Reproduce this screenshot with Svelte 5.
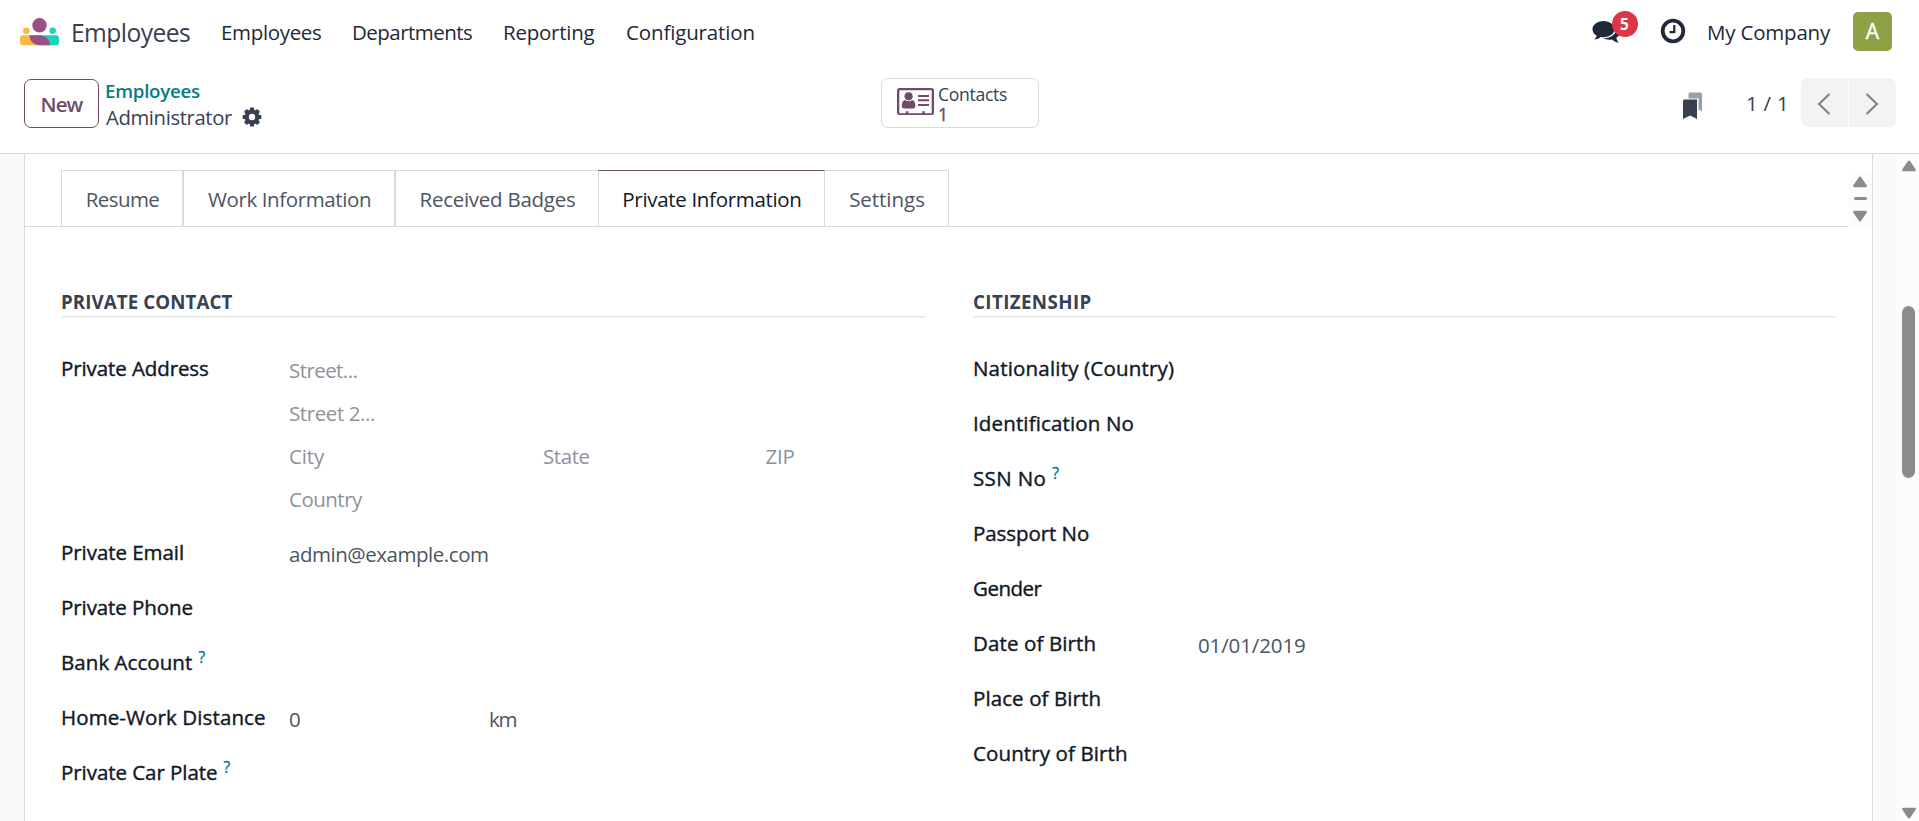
<script>
  const pen = document.createElement('canvas').getContext('2d');

  // Tracks a label so that its glyphs span the given width in pixels.
  function span(node, width) {
    const text = node.textContent;
    const cs = getComputedStyle(node);
    pen.font = `${cs.fontWeight} ${cs.fontSize} "Open Sans"`;
    const m = pen.measureText(text);
    const ink = m.actualBoundingBoxLeft + m.actualBoundingBoxRight;
    if (width && text.length > 1) {
      node.style.letterSpacing = `${(width - ink) / (text.length - 1)}px`;
    }
  }

  const menu = [
    { text: 'Employees', w: 98 },
    { text: 'Departments', w: 118 },
    { text: 'Reporting', w: 89.5 },
    { text: 'Configuration', w: 126.5 },
  ];

  const tabs = [
    { text: 'Resume', w: 71.5, size: 122 },
    { text: 'Work Information', w: 162, size: 212 },
    { text: 'Received Badges', w: 153.5, size: 203, before: true },
    { text: 'Private Information', w: 176, size: 227, active: true },
    { text: 'Settings', w: 74, size: 124, after: true },
  ];

  const contact = [
    { text: 'Private Email', w: 120, value: 'admin@example.com', vw: 199 },
    { text: 'Private Phone', w: 129.5 },
    { text: 'Bank Account', w: 129, help: true },
    { text: 'Home-Work Distance', w: 202, value: '0', unit: 'km' },
    { text: 'Private Car Plate', w: 154, help: true },
  ];

  const citizenship = [
    { text: 'Nationality (Country)', w: 199 },
    { text: 'Identification No', w: 158.5 },
    { text: 'SSN No', w: 71.5, help: true },
    { text: 'Passport No', w: 114 },
    { text: 'Gender', w: 68.5 },
    { text: 'Date of Birth', w: 119.5, value: '01/01/2019', vw: 106 },
    { text: 'Place of Birth', w: 124.5 },
    { text: 'Country of Birth', w: 152 },
  ];
</script>

{#snippet row(r)}
  <div class="row">
    <div class="label"><span use:span={r.w}>{r.text}</span>{#if r.help}<sup>?</sup>{/if}</div>
    <div class="value">
      {#if r.value}<span class="main" use:span={r.vw}>{r.value}</span>{/if}
      {#if r.unit}<span use:span={26.5}>{r.unit}</span>{/if}
    </div>
  </div>
{/snippet}

<div class="page">
  <header>
    <nav>
      <svg class="logo" width="40" height="28" viewBox="0 0 40 28">
        <path d="M3 17.2h17l9 10H3a3 3 0 0 1-3-3v-4a3 3 0 0 1 3-3z" fill="#fbb945" />
        <path d="M19 17.2h17a3 3 0 0 1 3 3v4a3 3 0 0 1-3 3H26z" fill="#1ad3bb" />
        <path d="M9.5 17.2H19c6 0 11 4 11 10H20c-6 0-10.500-4-10.500-10z" fill="#985184" />
        <circle cx="19.500" cy="7.300" r="7.200" fill="#985184" />
        <circle cx="6.300" cy="12.800" r="3.300" fill="#fbb945" />
        <circle cx="32.700" cy="12.800" r="3.200" fill="#1ad3bb" />
      </svg>
      <span class="brand"><span use:span={117}>Employees</span></span>
      {#each menu as m}
        <span class="item"><span use:span={m.w}>{m.text}</span></span>
      {/each}
      <div class="systray">
        <div class="chat">
          <svg width="29" height="25" viewBox="0 0 29 25" fill="#1f2937">
            <path d="M11.500 1C5.200 1 .5 4.700.5 9.300c0 2.700 1.600 5 4.200 6.500-.4 1.500-1.200 2.500-2.300 3.500 2.500-.1 4.600-1 6.300-2.400.9.200 1.800.3 2.800.3 6.300 0 11-3.500 11-7.900S17.800 1 11.500 1z" />
            <path d="M24.700 6.500c2 1.400 3.300 3.300 3.300 5.400 0 2.300-1.400 4.400-3.700 5.800.5 2.200 1.400 3.700 2.800 4.900-2.900-.2-5.300-1.400-7.100-3.200-3.200.6-6.300.1-8.800-1.100C19.200 18.400 25 13.800 24.700 6.500z" />
          </svg>
          <span class="badge">5</span>
        </div>
        <svg class="clock" width="26" height="26" viewBox="0 0 26 26" fill="none" stroke="#1f2937">
          <circle cx="13" cy="13" r="10.300" stroke-width="3.800" />
          <path d="M14.300 7v7.200H9.500" stroke-width="2.200" />
        </svg>
        <span class="company"><span use:span={122}>My Company</span></span>
        <span class="avatar">A</span>
      </div>
    </nav>

    <div class="control">
      <button class="new"><span use:span={42}>New</span></button>
      <div class="crumbs">
        <div class="parent"><span use:span={94}>Employees</span></div>
        <div class="current">
          <span use:span={126}>Administrator</span>
          <svg width="20" height="20" viewBox="-10 -10 20 20" fill="#374151">
            <g>
              {#each [0, 45, 90, 135] as a}
                <path transform="rotate({a})" d="M-1.800-9.400h3.600l.8 3.400v12l-.8 3.400h-3.600l-.8-3.400v-12z" />
              {/each}
              <circle r="7.200" />
            </g>
            <circle r="3.200" fill="#fff" />
          </svg>
        </div>
      </div>
      <div class="stat">
        <svg width="37" height="28" viewBox="0 0 37 28" fill="#714b67">
          <path fill-rule="evenodd" d="M2.500 0h32A2.500 2.500 0 0 1 37 2.500v22a2.500 2.500 0 0 1-2.500 2.500h-32A2.500 2.500 0 0 1 0 24.500v-22A2.500 2.500 0 0 1 2.500 0zM2.300 2.300v22.900h6.500v-2h2.600v2h13.800v-2h2.600v2h6.900V2.300z" />
          <circle cx="11.600" cy="8.300" r="4.100" />
          <path d="M8 12c2 1.600 5.200 1.600 7.200 0 2.300.5 3.200 3.200 3.200 5.800 0 1.700-.9 2.700-2.200 2.700H7c-1.300 0-2.200-1-2.200-2.700C4.800 15.200 5.700 12.500 8 12z" />
          <path d="M21 7h11v2H21zM21 11.200h11v2H21zM21 16h11v2H21z" />
        </svg>
        <div class="stat-text">
          <span><span use:span={68}>Contacts</span></span>
          <span class="count">1</span>
        </div>
      </div>
      <svg class="bookmark" width="20" height="28" viewBox="0 0 20 28">
        <path d="M7 .5h10.500A1.500 1.500 0 0 1 19 2v17.500l-3.500-2V6.500h-10V2A1.500 1.500 0 0 1 7 .5z" fill="#9b9fa8" />
        <path d="M1.500 7.500H14V27l-6.800-3.500L0 27V9a1.500 1.500 0 0 1 1.500-1.500z" fill="#374151" />
      </svg>
      <span class="count-text"><span use:span={38}>1 / 1</span></span>
      <div class="pager">
        <span><svg width="14" height="22" viewBox="0 0 14 22"><path d="M12.500 1 2 11l10.500 10" /></svg></span>
        <span><svg width="14" height="22" viewBox="0 0 14 22"><path d="M1.500 1 12 11 1.500 21" /></svg></span>
      </div>
    </div>
  </header>

  <main>
    <div class="sheet">
      <div class="tabbar">
        <div class="tabs">
          {#each tabs as t}
            <div class="tab" class:active={t.active} class:before={t.before} class:after={t.after} style="width: {t.size}px">
              <span use:span={t.w}>{t.text}</span>
            </div>
          {/each}
        </div>
        <div class="spin">
          <svg width="16" height="12" viewBox="0 0 16 12"><path d="M8 1.800 13.700 10H2.300z" /></svg>
          <i></i>
          <svg width="16" height="12" viewBox="0 0 16 12"><path d="M8 10.200 13.700 2H2.300z" /></svg>
        </div>
      </div>

      <div class="groups">
        <section>
          <h2><span use:span={170.5}>PRIVATE CONTACT</span></h2>
          <div class="row">
            <div class="label"><span use:span={145}>Private Address</span></div>
            <div class="address">
              <div><span use:span={66.5}>Street...</span></div>
              <div><span use:span={84}>Street 2...</span></div>
              <div class="city">
                <span use:span={35}>City</span>
                <span use:span={45.5}>State</span>
                <span use:span={29}>ZIP</span>
              </div>
              <div><span use:span={73}>Country</span></div>
            </div>
          </div>
          {#each contact as r}{@render row(r)}{/each}
        </section>
        <section class="right">
          <h2><span use:span={116.5}>CITIZENSHIP</span></h2>
          {#each citizenship as r}{@render row(r)}{/each}
        </section>
      </div>
    </div>

    <div class="scrollbar">
      <svg width="16" height="12" viewBox="0 0 16 12"><path d="M8 1.800 13.700 10H2.300z" /></svg>
      <div class="thumb"></div>
      <svg class="down" width="16" height="12" viewBox="0 0 16 12"><path d="M8 10.200 13.700 2H2.300z" /></svg>
    </div>
  </main>
</div>

<style>
  :global(body) { overflow: hidden; background: #fff; }
  .page {
    display: flex; flex-direction: column; height: 821px; overflow: hidden;
    font-family: "Open Sans", "Noto Sans", sans-serif; font-size: 20.5px; color: #374151;
  }
  svg { display: block; flex: none; }
  span { white-space: nowrap; }

  header { height: 153px; flex: none; border-bottom: 1px solid #d8dadd; }
  nav { display: flex; height: 65px; line-height: 65px; padding-left: 20px; color: #1f2937; }
  .logo { margin-top: 18px; }
  .brand { width: 148px; margin-left: 11px; font-size: 24.6px; color: #374151; }
  .item { margin: 0 31px 0 2px; }
  .item { width: 98px; }
  .item:nth-of-type(3) { width: 118px; }
  .item:nth-of-type(4) { width: 90px; }
  .systray { display: flex; margin-left: auto; padding-right: 27px; }
  .chat { position: relative; width: 68px; padding-top: 20px; }
  .badge {
    position: absolute; left: 20px; top: 11px; width: 26px; height: 26px; border-radius: 13px;
    background: #dc3545; color: #fff; font-size: 15.500px; font-weight: 700; line-height: 26px; text-align: center;
  }
  .clock { margin-top: 18px; }
  .company { width: 146px; margin-left: 21.500px; }
  .avatar {
    width: 39px; height: 39px; margin-top: 12px; border-radius: 5px; background: #8da145;
    color: #fff; font-weight: 500; font-size: 21px; line-height: 39px; text-align: center; -webkit-text-stroke: .4px;
  }

  .control { display: flex; height: 49px; padding: 13px 23px 0 24px; }
  button { font: inherit; }
  .new {
    box-sizing: border-box; width: 75px; height: 49px; margin-top: 1px; padding: 0; border: 1px solid #714b67;
    border-radius: 7px; background: #fff; color: #714b67; font-weight: 600; line-height: 48px;
  }
  .crumbs { width: 774px; margin-left: 6px; }
  .parent { height: 26px; line-height: 26px; font-size: 18.700px; font-weight: 600; color: #017e84; }
  .current { display: flex; gap: 10px; height: 28px; line-height: 27px; font-size: 20.300px; padding-left: 1px; }
  .current svg { margin-top: 3px; }
  .stat {
    box-sizing: border-box; display: flex; width: 158px; height: 50px; margin-left: 2px; padding: 9px 0 0 15px;
    border: 1px solid #d8dadd; border-radius: 7px;
  }
  .stat-text { display: flex; flex-direction: column; margin: -4px 0 0 4px; font-size: 17.600px; line-height: 20px; }
  .count { color: #714b67; -webkit-text-stroke: .4px; }
  .bookmark { margin: 14px 0 0 auto; }
  .count-text { width: 55px; margin-left: 43px; line-height: 50px; }
  .pager { display: flex; gap: 1px; }
  .pager span {
    display: flex; width: 47px; height: 49px; align-items: center; justify-content: center;
    background: #f2f3f5; border-radius: 7px 0 0 7px;
  }
  .pager span:last-child { border-radius: 0 7px 7px 0; }
  .pager svg { margin: 3px 2px 0 0; }
  .pager path { fill: none; stroke: #7d7f83; stroke-width: 2; }

  main { display: flex; flex: 1; min-height: 0; background: #f9fafb; padding-left: 24px; }
  .sheet { box-sizing: border-box; width: 1849px; border: solid #d8dadd; border-width: 0 1px; background: #fff; }
  .tabbar { display: flex; height: 57px; margin-top: 16px; }
  .tabs { display: flex; flex: 1; padding-left: 36px; box-shadow: inset 0 -1px #d8dadd; }
  .tab {
    box-sizing: border-box; height: 57px; padding-left: 1px; border: 1px solid #d8dadd; line-height: 57px; text-align: center; color: #4b5563;
  }
  .tab.active { border-top-color: #714b67; color: #111827; }
  .before { border-right: 0; }
  .after { border-left: 0; }
  .spin { display: flex; flex-direction: column; align-items: center; width: 23px; padding: 6px 1px 0 0; background: #fcfcfc; box-sizing: border-box; }
  .spin i { width: 13px; height: 3px; margin: 9px 0 10px; border-radius: 2px; background: #8b8b8b; }
  .spin path, .scrollbar path { fill: #8b8b8b; stroke: #8b8b8b; stroke-width: 2.400; stroke-linejoin: round; }

  .groups { display: grid; grid-template-columns: 864px 863px; gap: 48px; padding: 60px 0 0 36px; }
  h2 {
    height: 29px; margin: 0 0 24px; border-bottom: 1px solid #e3e4e6; box-shadow: 0 1px #f3f3f4;
    font-size: 18.700px; font-weight: 700; line-height: 29px;
  }
  .row { display: flex; min-height: 55px; }
  .label { width: 228px; padding-top: 12px; line-height: 31px; font-weight: 500; color: #111827; }
  .label span { -webkit-text-stroke: .4px; }
  .right .label { width: 225px; }
  sup { margin-left: 6px; font-size: 15.500px; line-height: 0; vertical-align: 7px; color: #0180a5; -webkit-text-stroke: .4px; }
  .value { display: flex; padding-top: 14px; line-height: 31px; color: #4b5563; }
  .value .main { min-width: 200px; }
  .address { height: 176px; padding-top: 8px; color: #8f9299; }
  .address div { height: 43px; line-height: 43px; }
  .city { display: grid; grid-template-columns: 254px 222.500px auto; }

  .scrollbar { display: flex; flex-direction: column; align-items: center; width: 21px; margin-left: auto; padding: 6px 0 0 2px; background: #fcfcfc; }
  .thumb { width: 13px; height: 172px; margin-top: 134px; border-radius: 7px; background: #8b8b8b; }
  .down { margin: auto 0 2px; }
</style>
